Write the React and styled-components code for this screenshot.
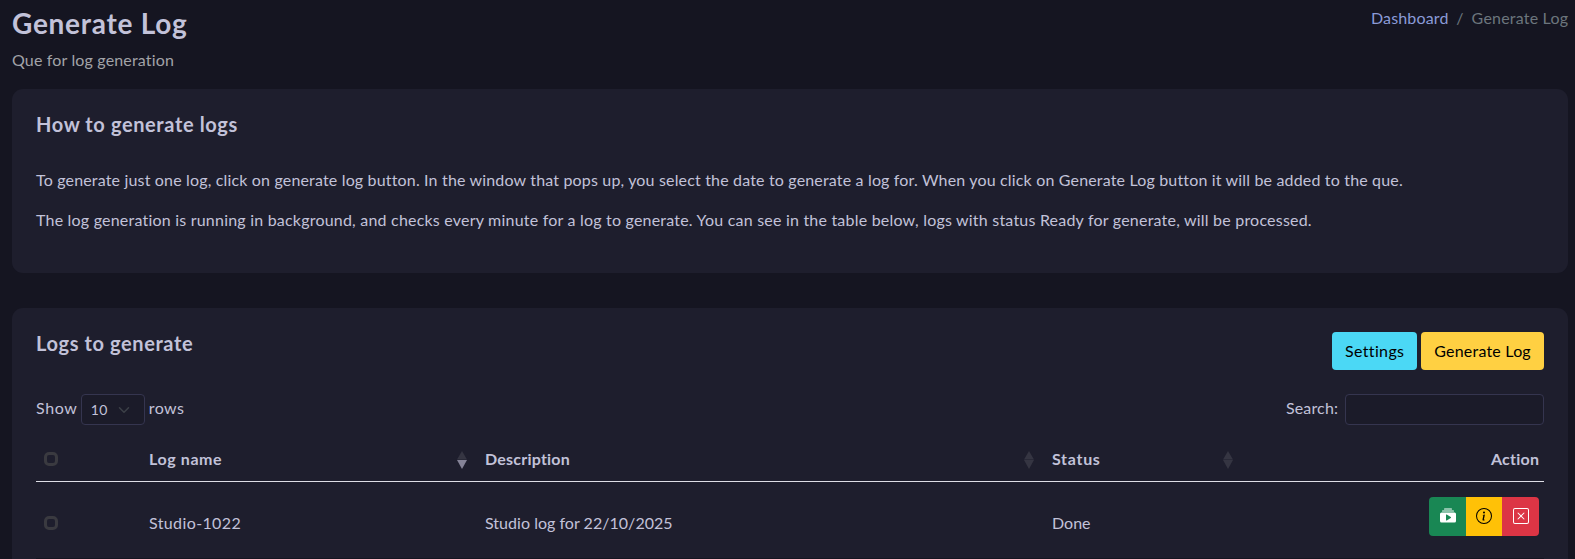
import React from "react";
import styled, { createGlobalStyle } from "styled-components";
import { BsInfoCircle, BsXSquare, BsCollectionPlayFill } from "react-icons/bs";

const GlobalStyle = createGlobalStyle`
  *, *::before, *::after { box-sizing: border-box; }
  html, body { margin: 0; height: 559px; overflow: hidden; background: #151521; }
  body {
    font: 400 16px/24px Lato, "Open Sans", sans-serif;
    font-variant-ligatures: none;
    color: #c2c2d9;
  }
  h3, h4, p { margin: 0; }
`;

const Page = styled.main`
  height: 559px;
  overflow: hidden;
  padding: 6px 7px 0 12px;
`;

const Text = styled.span`
  letter-spacing: ${(p) => p.$track || 0}px;
  margin-right: -${(p) => p.$track || 0}px;
  white-space: nowrap;
`;

const PageHeading = styled.header`
  display: flex;
  justify-content: space-between;
  height: 83px;
`;

const Title = styled.h3`
  font-size: 28px;
  font-weight: 700;
  line-height: 34px;
`;

const Subtitle = styled.p`
  margin-top: 8px;
  color: #a2a3a8;
`;

const Breadcrumb = styled.nav`
  display: flex;
  gap: 8px;
  height: 24px;
  color: #6c757d;
`;

const Crumb = styled.a`
  color: #8b9bd8;
`;

const Card = styled.section`
  background: #1e1e2d;
  border-radius: 11px;
  padding: 24px;
  height: ${(p) => p.$height}px;
  margin-bottom: 35px;
`;

const CardTitle = styled.h4`
  font-size: 20px;
  font-weight: 700;
  line-height: 22px;
`;

const Instructions = styled.div`
  display: grid;
  gap: 16px;
  padding-top: 33px;
`;

const CardHeader = styled.div`
  display: flex;
  justify-content: space-between;
  height: 38px;
`;

const ButtonBar = styled.div`
  display: flex;
  gap: 4px;
`;

const Button = styled.button`
  width: ${(p) => p.$width}px;
  height: 38px;
  padding: 0 0 1px;
  border: 0;
  border-radius: 4px;
  background: ${(p) => p.$color};
  color: #000;
  font: inherit;
`;

const Controls = styled.div`
  display: flex;
  justify-content: space-between;
  align-items: center;
  height: 31px;
  margin-top: 24px;
`;

const Control = styled.label`
  display: flex;
  align-items: center;
  gap: ${(p) => p.$gap}px;
`;

const ControlText = styled(Text)`
  padding-bottom: 3px;
`;

const LengthSelect = styled.span`
  display: flex;
  align-items: center;
  justify-content: space-between;
  width: 64px;
  height: 31px;
  padding: 0 14px 0 9px;
  border: 1px solid #35354f;
  border-radius: 4px;
  background: #1b1b29;
  font-size: 14px;
`;

const SearchInput = styled.input`
  width: 199px;
  height: 31px;
  border: 1px solid #35354f;
  border-radius: 4px;
  background: #1b1b29;
`;

const Row = styled.div`
  display: grid;
  grid-template-columns: 113px 336px 567px 199px 1fr;
  padding-right: 5px;
`;

const HeaderRow = styled(Row)`
  height: 41px;
  margin-top: 16px;
  padding-bottom: 2px;
  align-items: center;
  border-bottom: 1px solid #dedee6;
  font-weight: 700;
`;

const BodyRow = styled(Row)`
  height: 77px;
  padding-top: 15px;
  border-bottom: 1px solid #151521;
`;

const HeaderCell = styled.div`
  display: flex;
  align-items: center;
  justify-content: ${(p) => (p.$end ? "flex-end" : "space-between")};
  padding-right: ${(p) => (p.$end ? 0 : 18)}px;
`;

const HeaderText = styled(Text)`
  padding-bottom: 2px;
`;

const Cell = styled.div`
  padding-top: 14px;
`;

const CheckCell = styled.div`
  padding: ${(p) => p.$top}px 0 ${(p) => (p.$top ? 0 : 2)}px 8px;
`;

const Checkbox = styled.span`
  display: block;
  width: 14px;
  height: 14px;
  border: 3px solid #3a3a40;
  border-radius: 5px;
`;

const Actions = styled.div`
  display: flex;
  justify-content: flex-end;
`;

const ActionButton = styled.button`
  display: flex;
  align-items: center;
  justify-content: center;
  width: ${(p) => p.$width}px;
  height: 39px;
  padding: 0 0 1px;
  border: 0;
  background: ${(p) => p.$bg};
  color: ${(p) => p.$fg};
  font-size: 16px;
  &:first-child { border-radius: 4px 0 0 4px; }
  &:last-child { border-radius: 0 4px 4px 0; }
`;

function SortIcon({ sorted }) {
  return (
    <svg width="10" height="20" viewBox="0 0 10 20">
      <path d="M0 9.5 5 1l5 8.5z" fill="#353542" />
      <path d="M0 10h10l-5 9z" fill={sorted ? "#858397" : "#353542"} />
    </svg>
  );
}

function Chevron() {
  return (
    <svg width="12" height="12" viewBox="0 0 16 16" fill="none" stroke="#3c4048" strokeWidth="2" strokeLinecap="round" strokeLinejoin="round">
      <path d="m2 5 6 6 6-6" />
    </svg>
  );
}

export default function App() {
  return (
    <Page>
      <GlobalStyle />
      <PageHeading>
        <div>
          <Title><Text $track={0.72}>Generate Log</Text></Title>
          <Subtitle><Text $track={0.16}>Que for log generation</Text></Subtitle>
        </div>
        <Breadcrumb>
          <Crumb><Text $track={0.14}>Dashboard</Text></Crumb>
          <span>/</span>
          <Text $track={0.2}>Generate Log</Text>
        </Breadcrumb>
      </PageHeading>

      <Card $height={184}>
        <CardTitle><Text $track={0.61}>How to generate logs</Text></CardTitle>
        <Instructions>
          <p><Text $track={0.166}>To generate just one log, click on generate log button. In the window that pops up, you select the date to generate a log for. When you click on Generate Log button it will be added to the que.</Text></p>
          <p><Text $track={0.209}>The log generation is running in background, and checks every minute for a log to generate. You can see in the table below, logs with status Ready for generate, will be processed.</Text></p>
        </Instructions>
      </Card>

      <Card $height={300}>
        <CardHeader>
          <CardTitle><Text $track={0.6}>Logs to generate</Text></CardTitle>
          <ButtonBar>
            <Button $width={85} $color="#4bd8f5"><Text $track={0.36}>Settings</Text></Button>
            <Button $width={123} $color="#ffd042"><Text $track={0.2}>Generate Log</Text></Button>
          </ButtonBar>
        </CardHeader>
        <Controls>
          <Control $gap={4}>
            <ControlText $track={0.6}>Show</ControlText>
            <LengthSelect><Text $track={0.3}>10</Text><Chevron /></LengthSelect>
            <ControlText $track={0.4}>rows</ControlText>
          </Control>
          <Control $gap={7}>
            <ControlText $track={0.15}>Search:</ControlText>
            <SearchInput />
          </Control>
        </Controls>
        <HeaderRow>
          <CheckCell $top={0}><Checkbox /></CheckCell>
          <HeaderCell><HeaderText $track={0.6}>Log name</HeaderText><SortIcon sorted /></HeaderCell>
          <HeaderCell><HeaderText $track={0.22}>Description</HeaderText><SortIcon /></HeaderCell>
          <HeaderCell><HeaderText $track={0.7}>Status</HeaderText><SortIcon /></HeaderCell>
          <HeaderCell $end><HeaderText $track={0.25}>Action</HeaderText></HeaderCell>
        </HeaderRow>
        <BodyRow>
          <CheckCell $top={19}><Checkbox /></CheckCell>
          <Cell><Text $track={0.38}>Studio-1022</Text></Cell>
          <Cell><Text $track={0.03}>Studio log for 22/10/2025</Text></Cell>
          <Cell><Text>Done</Text></Cell>
          <Actions>
            <ActionButton $width={37} $bg="#198754" $fg="#fff"><BsCollectionPlayFill /></ActionButton>
            <ActionButton $width={36} $bg="#ffc107" $fg="#000"><BsInfoCircle /></ActionButton>
            <ActionButton $width={37} $bg="#dc3545" $fg="#fff"><BsXSquare /></ActionButton>
          </Actions>
        </BodyRow>
      </Card>
    </Page>
  );
}
